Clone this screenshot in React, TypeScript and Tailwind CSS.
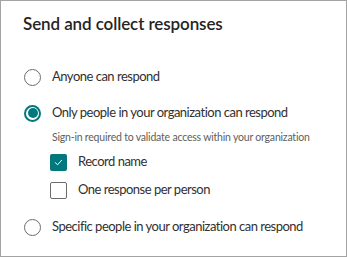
import React from "react";

const Radio: React.FC<{ checked?: boolean }> = ({ checked }) => (
  <span
    className={`flex h-[17px] w-[17px] shrink-0 items-center justify-center rounded-full ${
      checked ? "border-2 border-[#03787c]" : "border border-[#6e6c6a]"
    }`}
  >
    {checked && <span className="h-[10px] w-[10px] rounded-full bg-[#03787c]" />}
  </span>
);

const Checkbox: React.FC<{ checked?: boolean }> = ({ checked }) =>
  checked ? (
    <span className="flex h-[17px] w-[17px] shrink-0 items-center justify-center rounded-[2px] bg-[#03787c]">
      <svg width="9" height="9" viewBox="0 0 10 10" fill="none">
        <path d="M1.5 5.2 L4 7.5 L8.5 2.5" stroke="white" strokeWidth="1.1" strokeLinecap="round" strokeLinejoin="round" />
      </svg>
    </span>
  ) : (
    <span className="h-[17px] w-[17px] shrink-0 rounded-[2px] border border-[#6e6c6a]" />
  );

export default function App() {
  return (
    <div
      className="flex h-[257px] w-[347px] flex-col whitespace-nowrap border border-[#a3a3a3] bg-white pl-[23px] pt-[11px] text-[#323130]"
      style={{ fontFamily: 'Lato, "Noto Sans", sans-serif' }}
    >
      <h1 className="-ml-px text-[17px] leading-[24px] font-semibold tracking-[-0.1px] text-[#252423]">
        Send and collect responses
      </h1>

      <div className="mt-[31px] flex h-[20px] items-center gap-[11px]">
        <Radio />
        <span className="text-[13px] tracking-[-0.5px]">Anyone can respond</span>
      </div>

      <div className="mt-[16px] flex h-[20px] items-center gap-[11px]">
        <Radio checked />
        <span className="text-[13px] tracking-[-0.5px]">Only people in your organization can respond</span>
      </div>

      <p className="mt-[6px] ml-[28px] text-[10.5px] leading-[16px] tracking-[-0.2px] text-[#605e5c]">
        Sign-in required to validate access within your organization
      </p>

      <div className="mt-[7px] ml-[26px] flex h-[20px] items-center gap-[11px]">
        <Checkbox checked />
        <span className="text-[13px] tracking-[-0.5px]">Record name</span>
      </div>

      <div className="mt-[8px] ml-[26px] flex h-[20px] items-center gap-[11px]">
        <Checkbox />
        <span className="text-[13px] tracking-[-0.5px]">One response per person</span>
      </div>

      <div className="mt-[17px] flex h-[20px] items-center gap-[11px]">
        <Radio />
        <span className="text-[13px] tracking-[-0.5px]">Specific people in your organization can respond</span>
      </div>
    </div>
  );
}
